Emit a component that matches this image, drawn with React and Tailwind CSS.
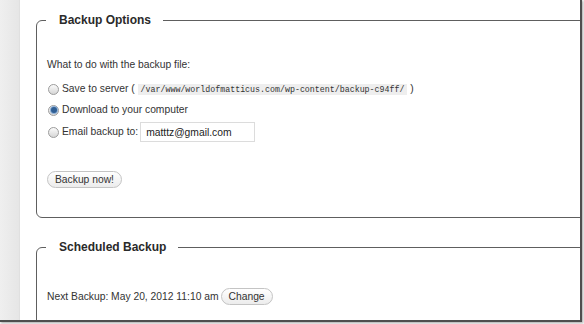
const sans = { fontFamily: '"Liberation Sans", Arial, sans-serif' }

const Radio = ({ checked }) => (
  <span className="relative ml-[1px] inline-flex items-center justify-center w-[11px] h-[11px] rounded-full border border-[#9c9c9c] bg-gradient-to-b from-[#fbfbfb] to-[#d6d6d6] shrink-0">
    {checked && (
      <span className="w-[6px] h-[6px] rounded-full bg-[#2f5f95] ring-1 ring-[#8fb0d6]" />
    )}
  </span>
)

const PillButton = ({ children, className = '' }) => (
  <button
    type="button"
    className={`h-[17px] px-[7px] rounded-full border border-[#c4c4c4] bg-gradient-to-b from-white to-[#ececec] text-[10.3px] leading-[15px] text-[#333] ${className}`}
  >
    {children}
  </button>
)

const Section = ({ title, className = '', children }) => (
  <div className={`relative w-[560px] border border-[#5e5e5e] rounded-[6px] ${className}`}>
    <div className="absolute -top-[8px] left-[9px] bg-white pl-[13px] pr-[12px] text-[12px] leading-[15px] font-bold text-[#2a2a2a]">
      {title}
    </div>
    {children}
  </div>
)

export default function App() {
  return (
    <div className="w-[584px] h-[324px] bg-[#f4f4f4]" style={sans}>
      <div className="w-[582px] h-[322px] overflow-hidden border-r-2 border-b-2 border-[#4e4e4e] bg-white flex shadow-[1px_1px_2px_rgba(0,0,0,0.3)]">
        <div className="w-[20px] shrink-0 bg-gradient-to-r from-[#efefef] to-[#e6e6e6] border-r border-[#e0e0e0]" />
        <div className="pl-[16px] pt-[20px]">
          <Section title="Backup Options" className="h-[198px]">
            <div className="pl-[10px] pt-[37px] flex flex-col text-[10.3px] text-[#333]">
              <p className="leading-[14px]">What to do with the backup file:</p>
              <label className="mt-[10px] h-[14px] flex items-center gap-[3px]">
                <Radio />
                <span className="whitespace-nowrap">
                  Save to server ({' '}
                  <code
                    className="bg-[#eeeeee] px-[3px] py-[1px] text-[8.3px] text-[#333]"
                    style={{ fontFamily: '"Liberation Mono", "Courier New", monospace' }}
                  >
                    /var/www/worldofmatticus.com/wp-content/backup-c94ff/
                  </code>{' '}
                  )
                </span>
              </label>
              <label className="mt-[7px] h-[14px] flex items-center gap-[3px]">
                <Radio checked />
                <span>Download to your computer</span>
              </label>
              <label className="mt-[5px] h-[20px] flex items-center gap-[3px]">
                <Radio />
                <span>Email backup to:</span>
                <input
                  readOnly
                  value="matttz@gmail.com"
                  className="ml-[-1px] w-[115px] h-[20px] px-[5px] border border-[#dcdcdc] bg-white text-[10.3px] text-[#222] outline-none"
                  style={sans}
                />
              </label>
              <div className="mt-[29px]">
                <PillButton>Backup now!</PillButton>
              </div>
            </div>
          </Section>

          <Section title="Scheduled Backup" className="mt-[29px] h-[100px]">
            <div className="pl-[10px] pt-[40px] flex items-center h-[57px] text-[10.3px] text-[#333]">
              <span>Next Backup: May 20, 2012 11:10 am</span>
              <PillButton className="ml-[2px]">Change</PillButton>
            </div>
          </Section>
        </div>
      </div>
    </div>
  )
}
